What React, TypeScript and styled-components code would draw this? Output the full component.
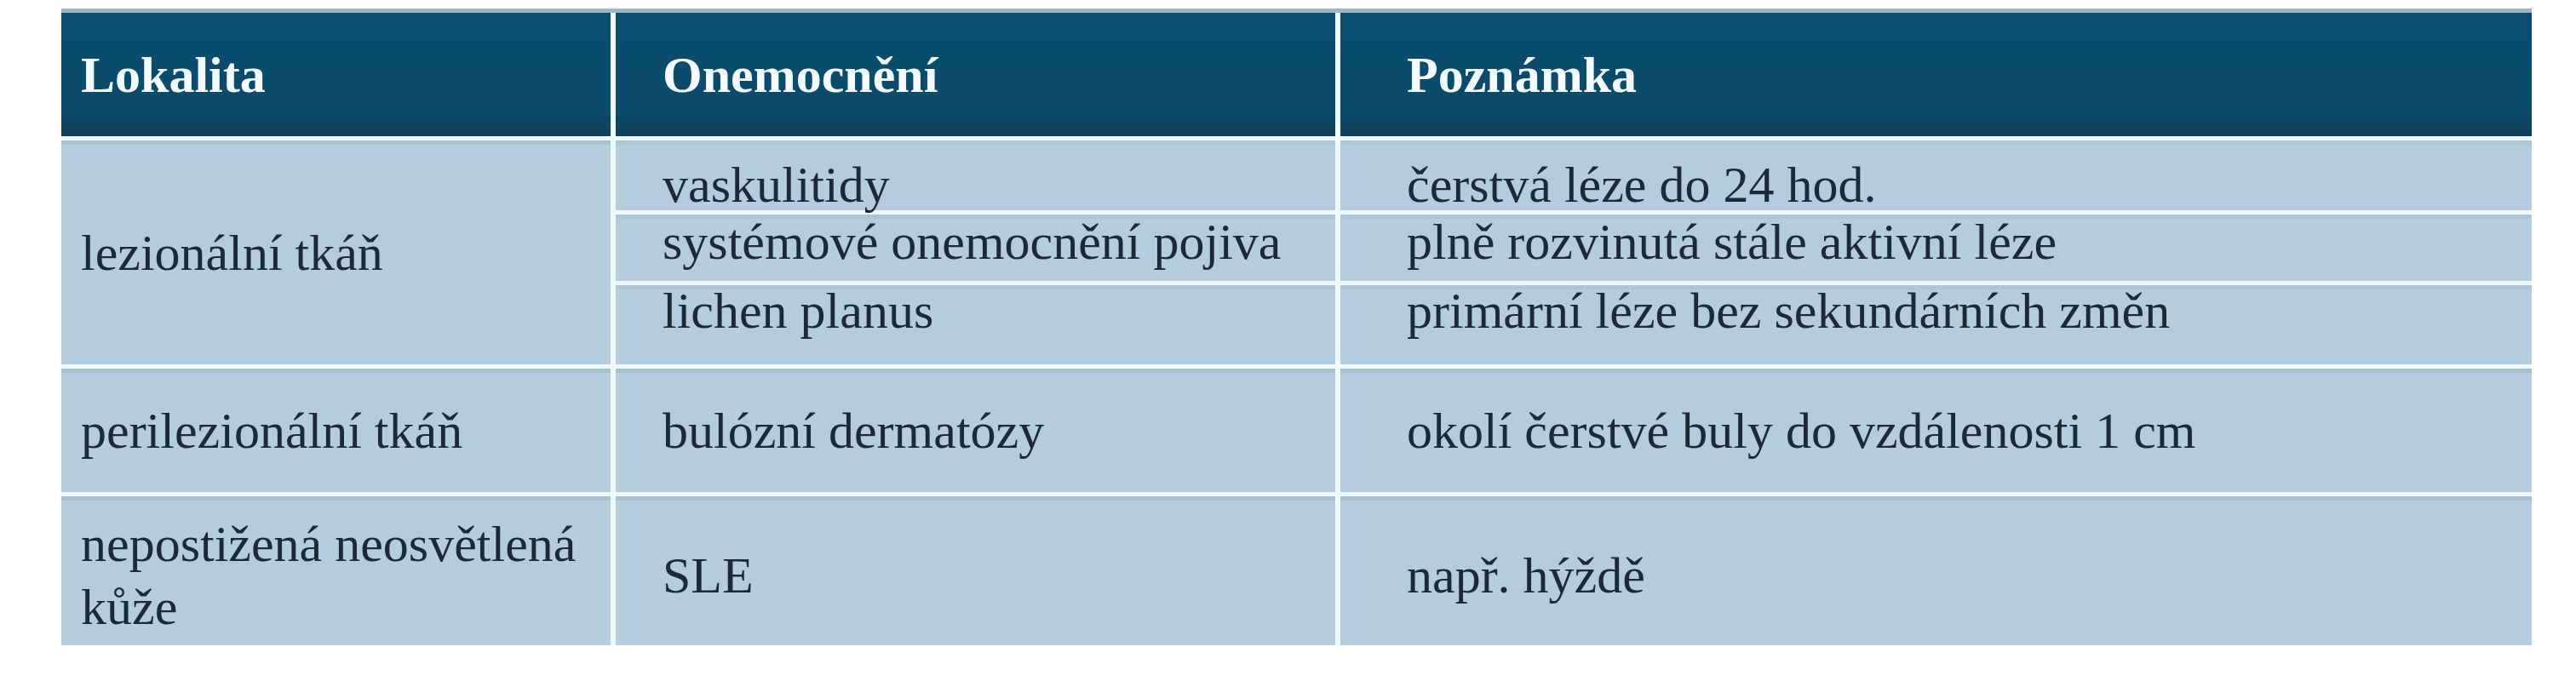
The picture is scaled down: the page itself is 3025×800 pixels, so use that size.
import React from "react";
import styled, { createGlobalStyle } from "styled-components";

const GlobalStyle = createGlobalStyle`
  html, body {
    margin: 0;
    padding: 0;
    background: #ffffff;
  }
  body {
    font-family: "Liberation Serif", "Times New Roman", serif;
  }
`;

const Page = styled.div`
  width: 3025px;
  height: 800px;
  padding: 10px 0 0 72px;
  box-sizing: border-box;
`;

const Table = styled.div`
  display: grid;
  width: 2901px;
  grid-template-columns: 645px 845px 1399px;
  grid-template-rows: 145px 82px 78px 93px 145px 175px;
  column-gap: 6px;
  row-gap: 5px;
  background: #eefaff;
  border-top: 5px solid #9fb6c4;
`;

const HeadCell = styled.div<{ $pad: number }>`
  display: flex;
  align-items: center;
  padding-left: ${(p) => p.$pad}px;
  background: linear-gradient(#0b4d6e 0%, #0a4b6c 80%, #123f58 100%);
  color: #f3fbff;
  font-weight: 700;
  font-size: 60px;
  line-height: 74px;
`;

const Cell = styled.div<{
  $pad: number;
  $span?: number;
  $down?: number;
}>`
  display: flex;
  align-items: center;
  box-sizing: border-box;
  padding-left: ${(p) => p.$pad}px;
  padding-right: 20px;
  padding-top: ${(p) => p.$down ?? 0}px;
  grid-row: span ${(p) => p.$span ?? 1};
  background: #b3cddf;
  box-shadow: inset 0 5px 0 #a9c0cf;
  color: #1c2936;
  font-size: 60px;
  line-height: 74px;
`;

const SubCell = styled.div<{ $pad: number; $top: number }>`
  box-sizing: border-box;
  padding-left: ${(p) => p.$pad}px;
  padding-top: ${(p) => p.$top}px;
  background: #b3cddf;
  box-shadow: inset 0 5px 0 #aec5d4;
  color: #1c2936;
  font-size: 60px;
  line-height: 60px;
  white-space: nowrap;
`;

const COL1 = 23;
const COL2 = 55;
const COL3 = 78;

const lesion = [
  { disease: "vaskulitidy", note: "čerstvá léze do 24 hod.", top: 22 },
  {
    disease: "systémové onemocnění pojiva",
    note: "plně rozvinutá stále aktivní léze",
    top: 2,
  },
  {
    disease: "lichen planus",
    note: "primární léze bez sekundárních změn",
    top: 0,
  },
];

export default function App() {
  return (
    <>
      <GlobalStyle />
      <Page>
        <Table>
          <HeadCell $pad={COL1}>Lokalita</HeadCell>
          <HeadCell $pad={COL2}>Onemocnění</HeadCell>
          <HeadCell $pad={COL3}>Poznámka</HeadCell>

          <Cell $pad={COL1} $span={3}>
            lezionální tkáň
          </Cell>
          {lesion.map((row, i) => (
            <React.Fragment key={row.disease}>
              <SubCell
                $pad={COL2}
                $top={row.top}
                style={{ gridColumn: 2, gridRow: i + 2 }}
              >
                {row.disease}
              </SubCell>
              <SubCell
                $pad={COL3}
                $top={row.top}
                style={{ gridColumn: 3, gridRow: i + 2 }}
              >
                {row.note}
              </SubCell>
            </React.Fragment>
          ))}

          <Cell $pad={COL1}>perilezionální tkáň</Cell>
          <Cell $pad={COL2}>bulózní dermatózy</Cell>
          <Cell $pad={COL3}>okolí čerstvé buly do vzdálenosti 1 cm</Cell>

          <Cell $pad={COL1} $down={10}>
            nepostižená neosvětlená kůže
          </Cell>
          <Cell $pad={COL2} $down={10}>
            SLE
          </Cell>
          <Cell $pad={COL3} $down={10}>
            např. hýždě
          </Cell>
        </Table>
      </Page>
    </>
  );
}
